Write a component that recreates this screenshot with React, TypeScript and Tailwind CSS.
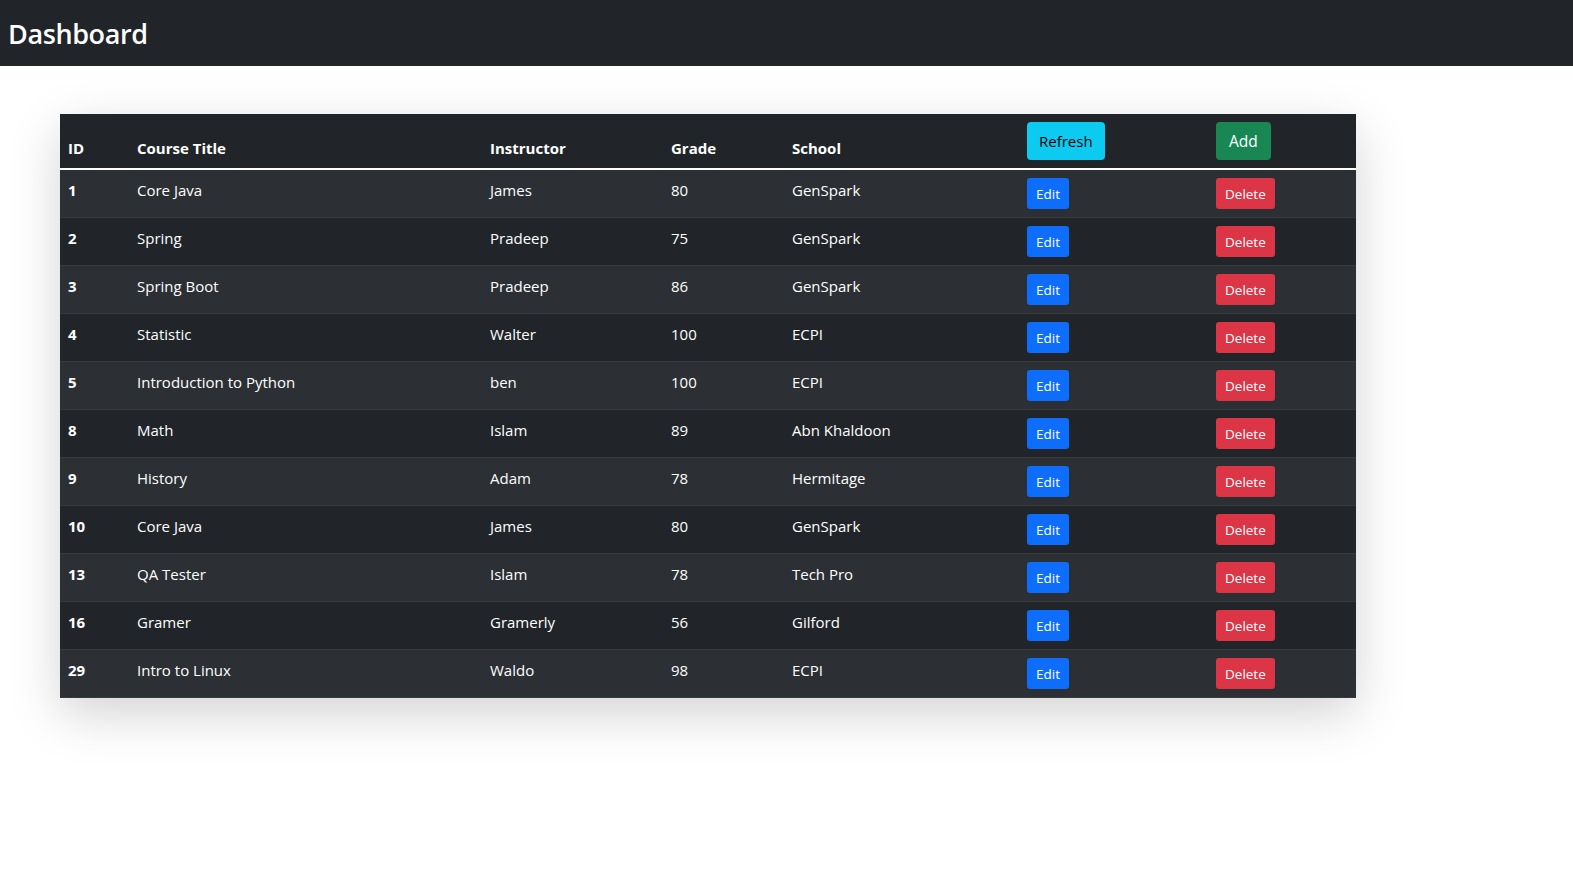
import React from "react";

const rows = [
  [1, "Core Java", "James", 80, "GenSpark"],
  [2, "Spring", "Pradeep", 75, "GenSpark"],
  [3, "Spring Boot", "Pradeep", 86, "GenSpark"],
  [4, "Statistic", "Walter", 100, "ECPI"],
  [5, "Introduction to Python", "ben", 100, "ECPI"],
  [8, "Math", "Islam", 89, "Abn Khaldoon"],
  [9, "History", "Adam", 78, "Hermitage"],
  [10, "Core Java", "James", 80, "GenSpark"],
  [13, "QA Tester", "Islam", 78, "Tech Pro"],
  [16, "Gramer", "Gramerly", 56, "Gilford"],
  [29, "Intro to Linux", "Waldo", 98, "ECPI"],
] as const;

export default function App() {
  return (
    <div className="min-h-screen bg-white text-white font-['Open_Sans',sans-serif]">
      <nav className="h-[66px] bg-[#212529] flex items-center pl-[8px]">
        <h1 className="text-[27px] font-semibold leading-none tracking-[-0.4px]">Dashboard</h1>
      </nav>
      <div className="pt-[48px] pl-[60px]">
        <table className="w-[1296px] table-fixed border-collapse shadow-[0_1rem_3rem_rgba(0,0,0,0.175)] text-[15px] leading-[24px]">
          <colgroup>
            <col className="w-[69px]" />
            <col className="w-[353px]" />
            <col className="w-[181px]" />
            <col className="w-[121px]" />
            <col className="w-[235px]" />
            <col className="w-[189px]" />
            <col className="w-[148px]" />
          </colgroup>
          <thead className="bg-[#212529]">
            <tr className="border-b-2 border-white">
              <th className="p-2 text-left align-bottom font-bold">ID</th>
              <th className="p-2 text-left align-bottom font-bold">Course Title</th>
              <th className="p-2 text-left align-bottom font-bold">Instructor</th>
              <th className="p-2 text-left align-bottom font-bold">Grade</th>
              <th className="p-2 text-left align-bottom font-bold">School</th>
              <th className="p-2 text-left align-bottom">
                <button className="h-[38px] px-3 rounded-[4px] bg-[#0dcaf0] text-black text-[15px] font-normal">
                  Refresh
                </button>
              </th>
              <th className="p-2 text-left align-bottom">
                <button className="h-[38px] px-[13px] rounded-[4px] bg-[#198754] text-white text-[15.5px] font-normal">
                  Add
                </button>
              </th>
            </tr>
          </thead>
          <tbody>
            {rows.map((r, i) => (
              <tr
                key={i}
                className={`border-b border-[#373b3e] ${i % 2 === 0 ? "bg-[#2c3034]" : "bg-[#212529]"}`}
              >
                <td className="p-2 align-top font-bold">{r[0]}</td>
                <td className="p-2 align-top">{r[1]}</td>
                <td className="p-2 align-top">{r[2]}</td>
                <td className="p-2 align-top">{r[3]}</td>
                <td className="p-2 align-top">{r[4]}</td>
                <td className="p-2 align-top">
                  <button className="h-[31px] px-[9px] rounded-[3px] bg-[#0d6efd] text-white text-[13.5px]">Edit</button>
                </td>
                <td className="p-2 align-top">
                  <button className="h-[31px] px-[9px] rounded-[3px] bg-[#dc3545] text-white text-[13.5px]">Delete</button>
                </td>
              </tr>
            ))}
          </tbody>
        </table>
      </div>
    </div>
  );
}
